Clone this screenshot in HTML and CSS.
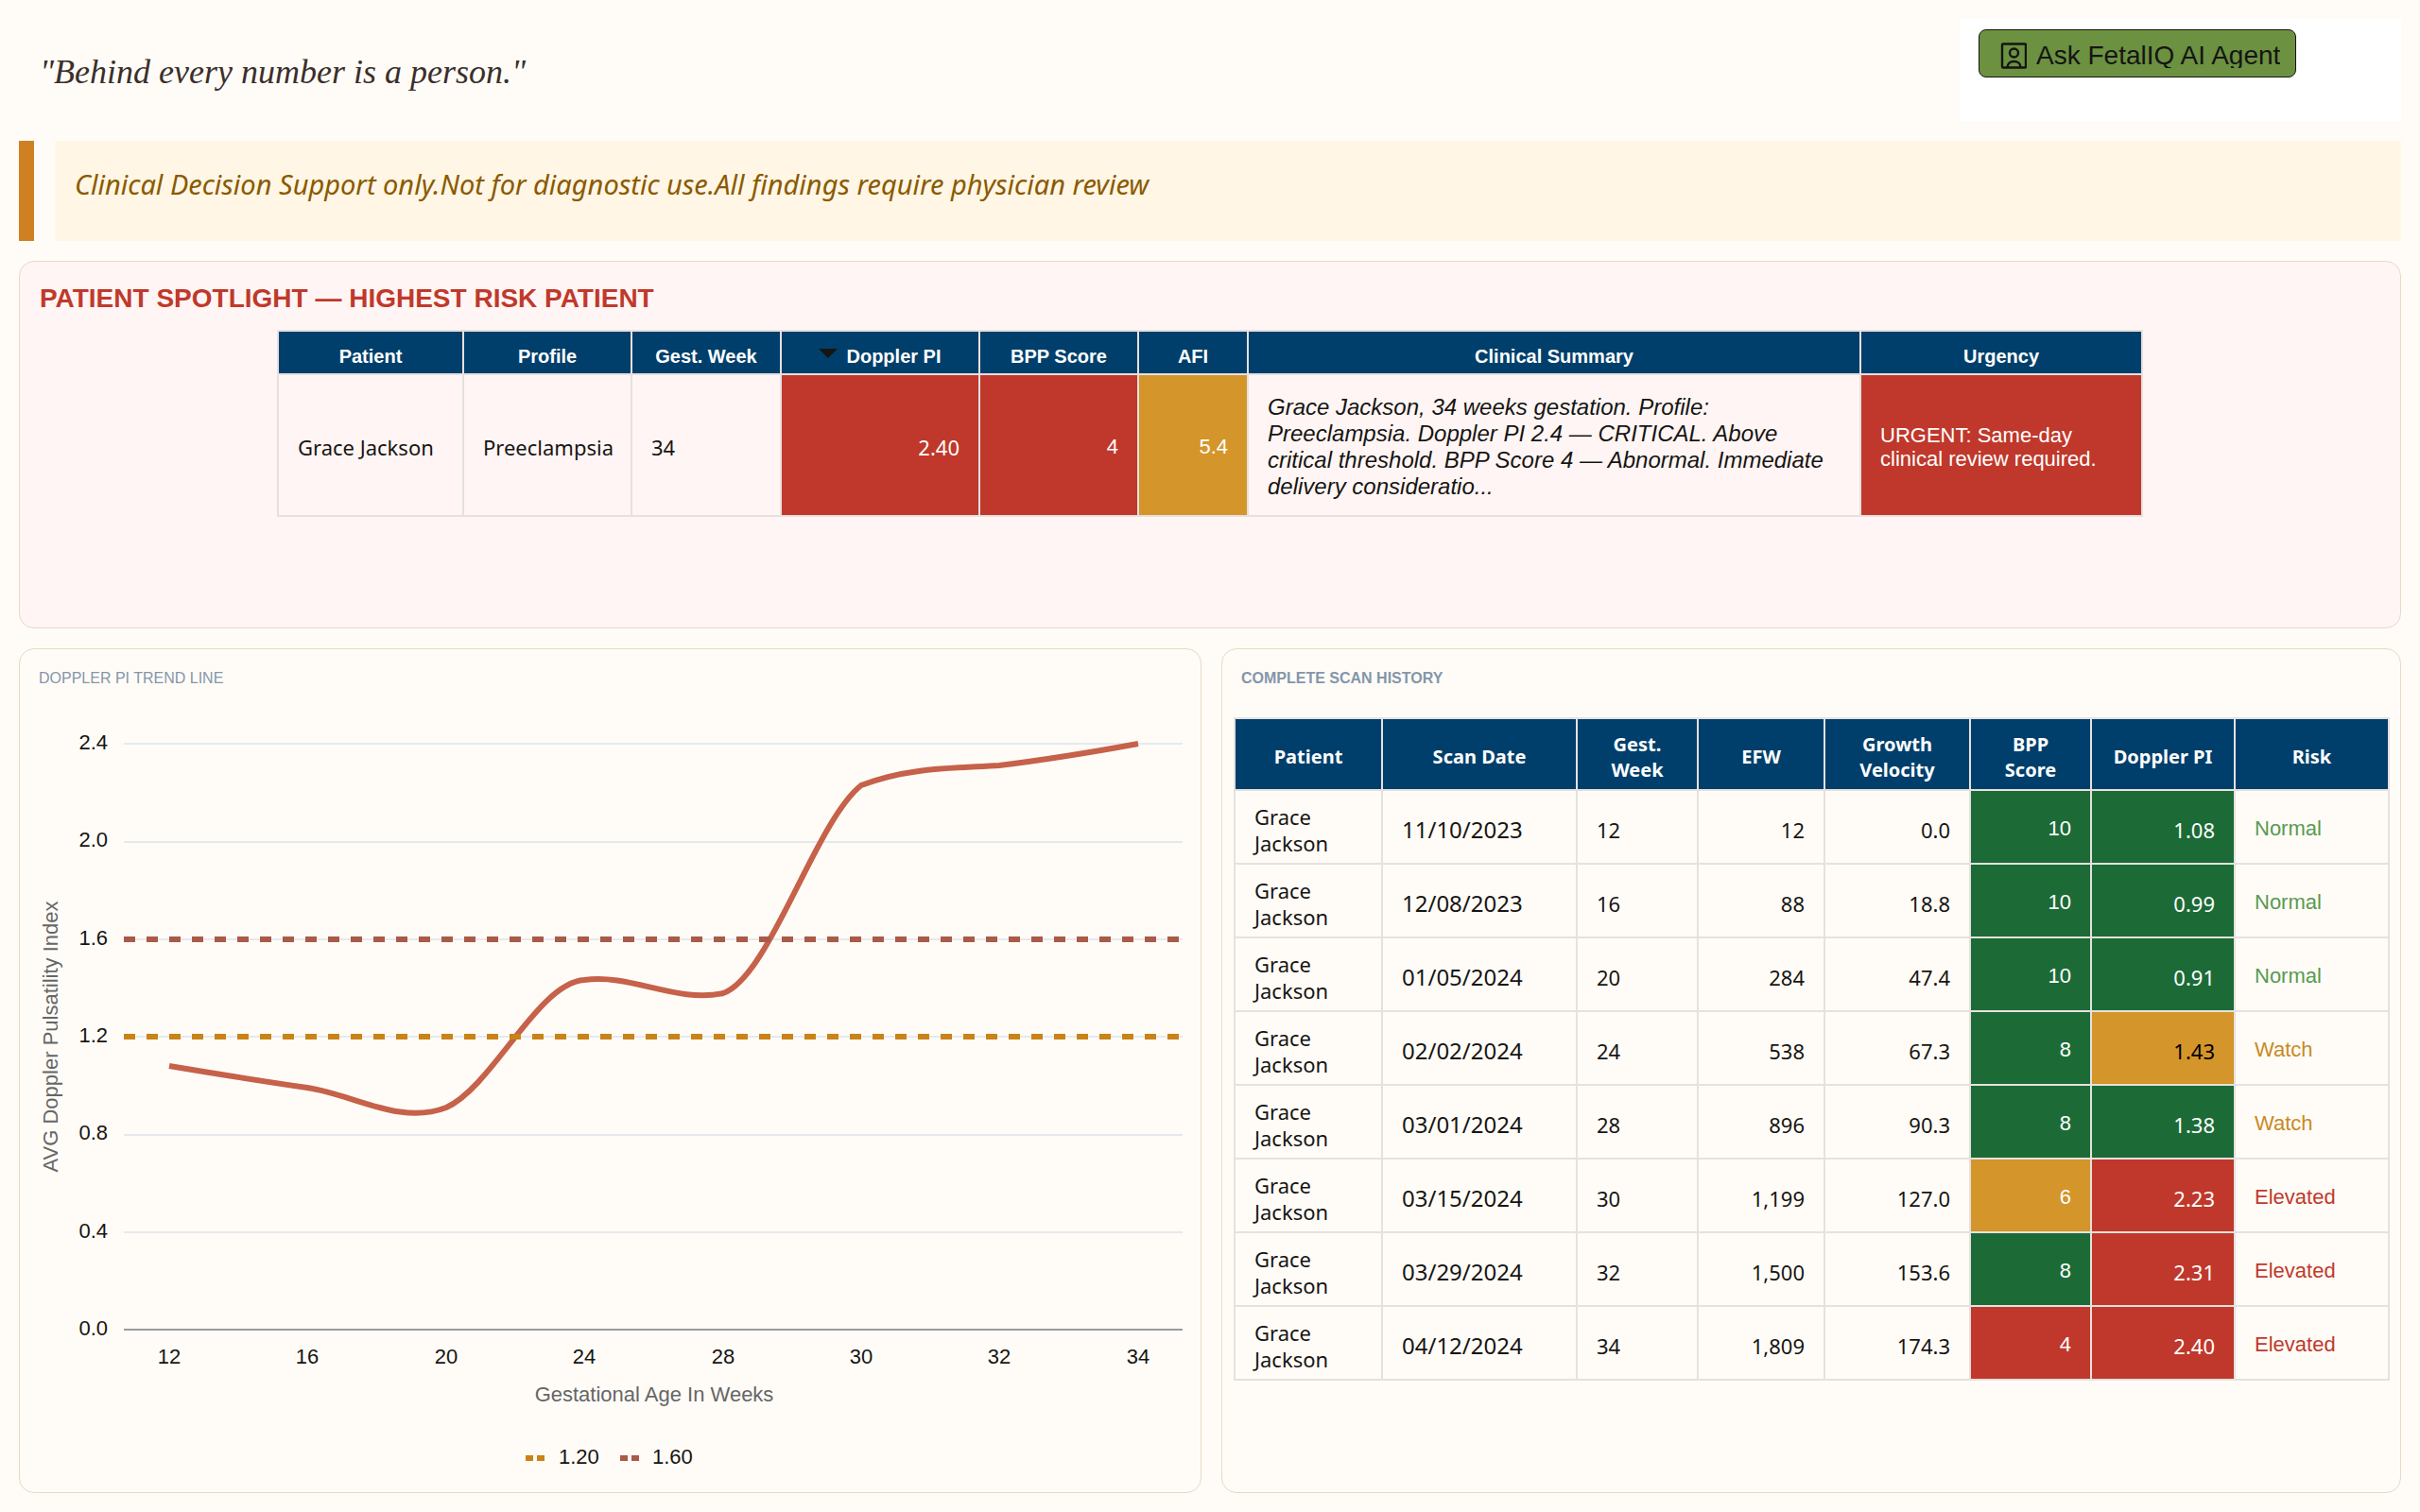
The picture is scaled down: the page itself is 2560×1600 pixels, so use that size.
FILE: index.html
```html
<!DOCTYPE html>
<html lang="en">
<head>
<meta charset="utf-8">
<meta name="viewport" content="width=device-width, initial-scale=1">
<title>FetalIQ</title>
<link rel="stylesheet" href="styles.css">
</head>
<body>
<main class="page">
  <header class="top">
    <p class="quote">"Behind every number is a person."</p>
    <div class="agent">
      <button type="button" class="agent-button">
        <svg class="agent-icon" viewBox="0 0 28 28" aria-hidden="true">
          <g fill="none" stroke="currentColor" stroke-width="2.400">
            <rect x="2" y="1.500" width="25" height="25" rx="1"/>
            <circle cx="14.500" cy="11" r="4.500"/>
            <path d="M7.500 26.500c0-4 3-6.500 7-6.500s7 2.500 7 6.500"/>
          </g>
        </svg>
        <span class="agent-label">Ask FetalIQ AI Agent</span>
      </button>
    </div>
  </header>

  <section class="notice">
    <p class="notice-text">Clinical Decision Support only.Not for diagnostic use.All findings require physician review</p>
  </section>

  <section class="panel spotlight">
    <h1 class="spotlight-title">PATIENT SPOTLIGHT — HIGHEST RISK PATIENT</h1>
    <table class="grid spotlight-grid">
      <colgroup>
        <col class="s-patient"><col class="s-profile"><col class="s-week"><col class="s-doppler"><col class="s-bpp"><col class="s-afi"><col class="s-summary"><col class="s-urgency">
      </colgroup>
      <thead>
        <tr><th>Patient</th><th>Profile</th><th>Gest. Week</th><th><span class="sorted">Doppler PI</span></th><th>BPP Score</th><th>AFI</th><th>Clinical Summary</th><th>Urgency</th></tr>
      </thead>
      <tbody>
        <tr>
          <td>Grace Jackson</td><td>Preeclampsia</td><td>34</td>
          <td class="num red">2.40</td><td class="num red sans">4</td><td class="num amber sans">5.4</td>
          <td class="summary">Grace Jackson, 34 weeks gestation. Profile: Preeclampsia. Doppler PI 2.4 — CRITICAL. Above critical threshold. BPP Score 4 — Abnormal. Immediate delivery consideratio...</td>
          <td class="red urgency">URGENT: Same-day clinical review required.</td>
        </tr>
      </tbody>
    </table>
  </section>

  <div class="columns">
    <section class="panel">
      <h2 class="panel-title light">DOPPLER PI TREND LINE</h2>
      <svg class="chart" viewBox="0 0 1249 830" role="img" aria-label="Doppler PI trend line">
        <g class="gridlines">
          <path d="M110 47H1230M110 151H1230M110 254H1230M110 357H1230M110 461H1230M110 564H1230"/>
          <path class="axis" d="M110 667H1230"/>
        </g>
        <path class="trend" d="M158 388C182 392 255 404 304 411C353 418 402 451 451 432C500 410 548 300 597 297C646 290 695 322 744 311C793 294 841 130 890 91C939 72 987 73 1036 70C1085 64 1134 56 1183 47"/>
        <path class="limit high" d="M110 254H1230"/>
        <path class="limit watch" d="M110 357H1230"/>
        <g class="ticks end">
          <text x="93" y="53">2.4</text><text x="93" y="156">2.0</text><text x="93" y="260">1.6</text><text x="93" y="363">1.2</text><text x="93" y="466">0.8</text><text x="93" y="570">0.4</text><text x="93" y="673">0.0</text>
        </g>
        <g class="ticks middle">
          <text x="158" y="703">12</text><text x="304" y="703">16</text><text x="451" y="703">20</text><text x="597" y="703">24</text><text x="744" y="703">28</text><text x="890" y="703">30</text><text x="1036" y="703">32</text><text x="1183" y="703">34</text>
        </g>
        <text class="axis-title" x="671" y="743">Gestational Age In Weeks</text>
        <text class="axis-title" transform="translate(40 357) rotate(-90)">AVG Doppler Pulsatility Index</text>
        <g class="ticks">
          <path class="key watch" d="M535 803H555"/><text x="570" y="809">1.20</text>
          <path class="key high" d="M635 803H655"/><text x="669" y="809">1.60</text>
        </g>
      </svg>
    </section>

    <section class="panel">
      <h2 class="panel-title">COMPLETE SCAN HISTORY</h2>
      <table class="grid history-grid">
        <colgroup>
          <col class="h-patient"><col class="h-date"><col class="h-week"><col class="h-efw"><col class="h-growth"><col class="h-bpp"><col class="h-doppler"><col class="h-risk">
        </colgroup>
        <thead>
          <tr><th>Patient</th><th>Scan Date</th><th>Gest. Week</th><th>EFW</th><th>Growth Velocity</th><th>BPP Score</th><th>Doppler PI</th><th>Risk</th></tr>
        </thead>
        <tbody>
          <tr><td>Grace Jackson</td><td class="date">11/10/2023</td><td>12</td><td class="num">12</td><td class="num">0.0</td><td class="num green sans">10</td><td class="num green">1.08</td><td class="sans normal">Normal</td></tr>
          <tr><td>Grace Jackson</td><td class="date">12/08/2023</td><td>16</td><td class="num">88</td><td class="num">18.8</td><td class="num green sans">10</td><td class="num green">0.99</td><td class="sans normal">Normal</td></tr>
          <tr><td>Grace Jackson</td><td class="date">01/05/2024</td><td>20</td><td class="num">284</td><td class="num">47.4</td><td class="num green sans">10</td><td class="num green">0.91</td><td class="sans normal">Normal</td></tr>
          <tr><td>Grace Jackson</td><td class="date">02/02/2024</td><td>24</td><td class="num">538</td><td class="num">67.3</td><td class="num green sans">8</td><td class="num amber dark">1.43</td><td class="sans watching">Watch</td></tr>
          <tr><td>Grace Jackson</td><td class="date">03/01/2024</td><td>28</td><td class="num">896</td><td class="num">90.3</td><td class="num green sans">8</td><td class="num green">1.38</td><td class="sans watching">Watch</td></tr>
          <tr><td>Grace Jackson</td><td class="date">03/15/2024</td><td>30</td><td class="num">1,199</td><td class="num">127.0</td><td class="num amber sans">6</td><td class="num red">2.23</td><td class="sans elevated">Elevated</td></tr>
          <tr><td>Grace Jackson</td><td class="date">03/29/2024</td><td>32</td><td class="num">1,500</td><td class="num">153.6</td><td class="num green sans">8</td><td class="num red">2.31</td><td class="sans elevated">Elevated</td></tr>
          <tr><td>Grace Jackson</td><td class="date">04/12/2024</td><td>34</td><td class="num">1,809</td><td class="num">174.3</td><td class="num red sans">4</td><td class="num red">2.40</td><td class="sans elevated">Elevated</td></tr>
        </tbody>
      </table>
    </section>
  </div>
</main>
</body>
</html>
```
FILE: styles.css
```css
* { box-sizing: border-box; }

body {
  margin: 0;
  background: #fffcf7;
  color: #161513;
  font-family: "Noto Sans", "Open Sans", sans-serif;
  font-size: 22px;
  line-height: 28px;
}

h1, h2, p { margin: 0; }

.page {
  display: flex;
  flex-direction: column;
  gap: 21px;
  min-height: 100vh;
  padding: 20px;
}

.top {
  display: flex;
  justify-content: space-between;
  min-height: 108px;
}

.quote {
  padding: 34px 22px 0;
  font: italic 36px/44px "Liberation Serif", serif;
  color: #3b2f2b;
}

.agent {
  flex: 0 1 467px;
  padding: 11px 20px;
  background: #fff;
}

.agent-button {
  display: flex;
  align-items: center;
  gap: 10px;
  padding: 14px 16px 9px 22px;
  border: 1px solid #161513;
  border-radius: 8px;
  background: #6b9141;
  color: #161513;
  font: 28px/26px "Liberation Sans", sans-serif;
}

.agent-icon { width: 28px; height: 28px; margin: -1px 0; }

.agent-label { overflow: hidden; height: 26px; white-space: nowrap; }

.notice {
  display: flex;
  gap: 22px;
  min-height: 106px;
}

.notice::before {
  content: "";
  width: 16px;
  background: #ce8023;
}

.notice-text {
  flex: 1;
  padding: 26px 21px;
  background: #fff6e5;
  color: #8a5a00;
  font-size: 29px;
  font-style: italic;
  line-height: 40px;
}

.panel {
  border: 1px solid #ead8c6;
  border-radius: 16px;
  min-width: 0;
}

.spotlight {
  min-height: 389px;
  background: #fff5f4;
}

.spotlight-title {
  padding: 22px 21px 0;
  color: #c0392b;
  font: bold 28px/34px "Liberation Sans", sans-serif;
}

.columns {
  flex: 1;
  display: grid;
  grid-template-columns: 1251fr 1248fr;
  gap: 21px;
}

.panel-title {
  padding: 21px 20px 0;
  color: #8496ab;
  font: bold 16px/20px "Liberation Sans", sans-serif;
}

.light { font-weight: normal; }

/* Data tables */
.grid {
  border-collapse: collapse;
  table-layout: fixed;
}

.grid th, .grid td { border: 2px solid #e6e1df; }

.grid th {
  padding: 5px 16px 0;
  background: #003f6b;
  color: #fff;
  font-size: 20px;
  line-height: 27px;
}

.grid td {
  padding: 13px 20px 7px;
  text-align: left;
}

.grid .num { text-align: right; }
.grid .sans { font-family: "Liberation Sans", sans-serif; }
.grid .date { font-size: 24px; }
.green { background: #1c6b36; color: #fff; }
.amber { background: #d4952a; color: #fff; }
.red { background: #c0382b; color: #fff; }
.dark { color: #000; }
.normal { color: #5a9a52; }
.watching { color: #c98a24; }
.elevated { color: #c0392b; }

.spotlight-grid { width: 78%; margin: 16px auto 0; }
.spotlight-grid th {
  height: 46px;
  padding: 8px 8px 0;
  font-family: "Liberation Sans", sans-serif;
}
.spotlight-grid td { height: 150px; padding: 8px 20px 4px; }
.spotlight-grid .summary {
  font: italic 24px/28px "Liberation Sans", sans-serif;
}
.spotlight-grid .urgency {
  font: 22px/25px "Liberation Sans", sans-serif;
}
.s-patient { width: 196px; }
.s-profile { width: 178px; }
.s-week { width: 158px; }
.s-doppler { width: 210px; }
.s-bpp { width: 168px; }
.s-afi { width: 116px; }
.s-summary { width: 648px; }
.s-urgency { width: 298px; }

.sorted {
  display: flex;
  align-items: center;
  justify-content: center;
  gap: 9px;
}
.sorted::before {
  content: "";
  border: 10px solid transparent;
  border-top-color: #161513;
  border-bottom: 0;
  margin-bottom: 6px;
}

.history-grid { width: calc(100% - 26px); margin: 31px 13px 20px 12px; }
.history-grid th { height: 76px; }
.history-grid td { height: 78px; }
.history-grid .sans { padding: 12px 20px 8px; }
.h-patient { width: 156px; }
.h-date { width: 206px; }
.h-week { width: 128px; }
.h-efw { width: 134px; }
.h-growth { width: 154px; }
.h-bpp { width: 128px; }
.h-doppler { width: 152px; }
.h-risk { width: 163px; }

/* Trend chart */
.chart {
  display: block;
  width: 100%;
  margin-top: 12px;
  font: 22px "Liberation Sans", sans-serif;
  fill: #161513;
}
.gridlines { fill: none; stroke: #e6e9ec; stroke-width: 2; }
.axis { stroke: #9a9c9d; }
.trend { fill: none; stroke: #c6614a; stroke-width: 6; }
.limit { fill: none; stroke-width: 6; stroke-dasharray: 12; }
.key { fill: none; stroke-width: 6; stroke-dasharray: 8 4; }
.high { stroke: #a95a48; }
.watch { stroke: #c98318; }
.end { text-anchor: end; }
.middle { text-anchor: middle; }
.axis-title { text-anchor: middle; fill: #666; }
```
